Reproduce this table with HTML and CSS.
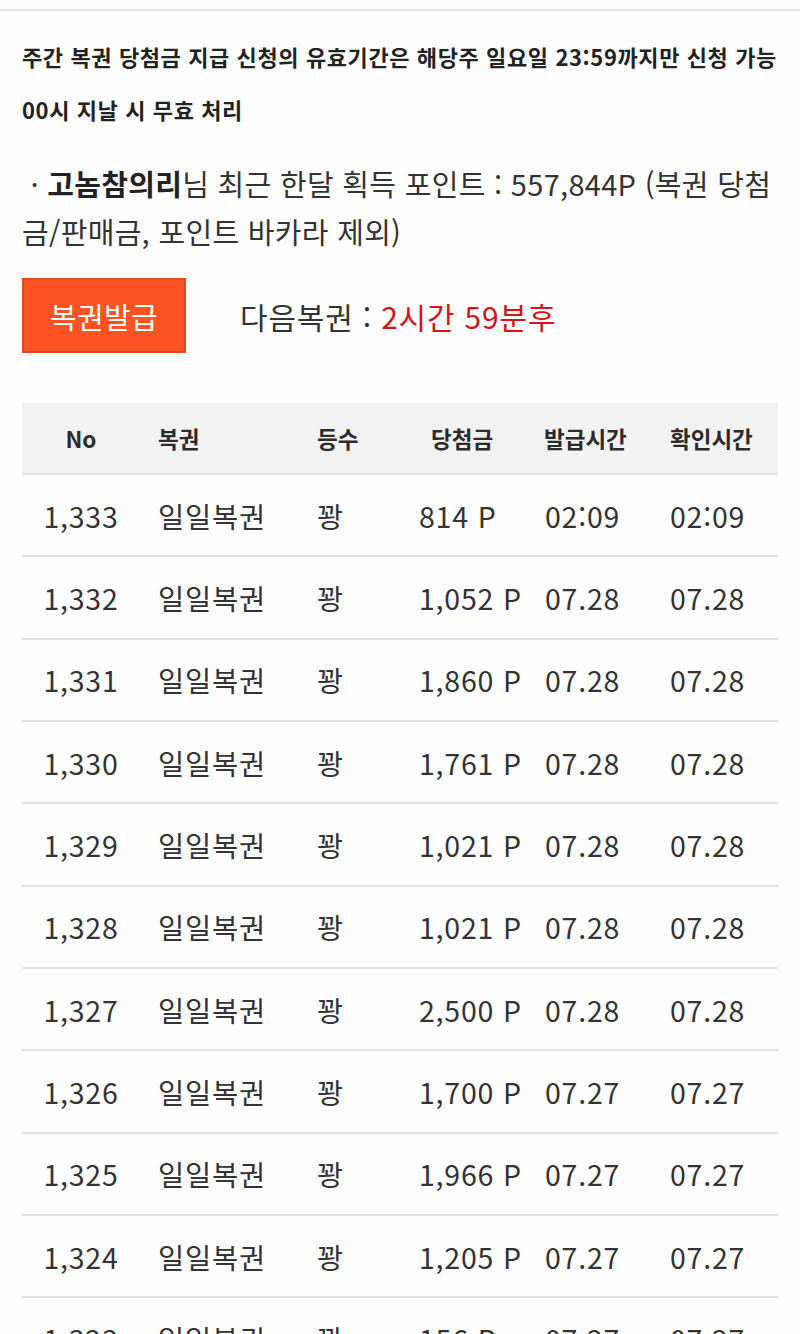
FILE: index.html
```html
<!DOCTYPE html>
<html lang="ko">
<head>
<meta charset="utf-8">
<link rel="stylesheet" href="styles.css">
</head>
<body>
<div class="topline"></div>
<main class="content">
  <p class="notice">주간 복권 당첨금 지급 신청의 유효기간은 해당주 일요일 23:59까지만 신청 가능<br>00시 지날 시 무효 처리</p>
  <p class="info">&nbsp;· <b>고놈참의리</b>님 최근 한달 획득 포인트 : 557,844P (복권 당첨금/판매금, 포인트 바카라 제외)</p>
  <div class="issue">
    <button class="issue-btn" type="button">복권발급</button>
    <span class="next">다음복권 : <span class="remain">2시간 59분후</span></span>
  </div>
  <div class="table">
    <div class="row head">
      <span class="c1">No</span><span class="c2">복권</span><span class="c3">등수</span><span class="c4">당첨금</span><span class="c5">발급시간</span><span class="c6">확인시간</span>
    </div>
    <div class="row"><span class="c1">1,333</span><span class="c2">일일복권</span><span class="c3">꽝</span><span class="c4">814 P</span><span class="c5">02:09</span><span class="c6">02:09</span></div>
    <div class="row"><span class="c1">1,332</span><span class="c2">일일복권</span><span class="c3">꽝</span><span class="c4">1,052 P</span><span class="c5">07.28</span><span class="c6">07.28</span></div>
    <div class="row"><span class="c1">1,331</span><span class="c2">일일복권</span><span class="c3">꽝</span><span class="c4">1,860 P</span><span class="c5">07.28</span><span class="c6">07.28</span></div>
    <div class="row"><span class="c1">1,330</span><span class="c2">일일복권</span><span class="c3">꽝</span><span class="c4">1,761 P</span><span class="c5">07.28</span><span class="c6">07.28</span></div>
    <div class="row"><span class="c1">1,329</span><span class="c2">일일복권</span><span class="c3">꽝</span><span class="c4">1,021 P</span><span class="c5">07.28</span><span class="c6">07.28</span></div>
    <div class="row"><span class="c1">1,328</span><span class="c2">일일복권</span><span class="c3">꽝</span><span class="c4">1,021 P</span><span class="c5">07.28</span><span class="c6">07.28</span></div>
    <div class="row"><span class="c1">1,327</span><span class="c2">일일복권</span><span class="c3">꽝</span><span class="c4">2,500 P</span><span class="c5">07.28</span><span class="c6">07.28</span></div>
    <div class="row"><span class="c1">1,326</span><span class="c2">일일복권</span><span class="c3">꽝</span><span class="c4">1,700 P</span><span class="c5">07.27</span><span class="c6">07.27</span></div>
    <div class="row"><span class="c1">1,325</span><span class="c2">일일복권</span><span class="c3">꽝</span><span class="c4">1,966 P</span><span class="c5">07.27</span><span class="c6">07.27</span></div>
    <div class="row"><span class="c1">1,324</span><span class="c2">일일복권</span><span class="c3">꽝</span><span class="c4">1,205 P</span><span class="c5">07.27</span><span class="c6">07.27</span></div>
    <div class="row"><span class="c1">1,323</span><span class="c2">일일복권</span><span class="c3">꽝</span><span class="c4">156 P</span><span class="c5">07.27</span><span class="c6">07.27</span></div>
  </div>
</main>
</body>
</html>
```
FILE: styles.css
```css
html, body {
  margin: 0;
  padding: 0;
  background: #fdfefd;
}
body {
  font-family: "Noto Sans CJK KR", "Noto Sans", sans-serif;
  color: #333;
  overflow: hidden;
}
.topline {
  height: 9px;
  border-bottom: 2px solid #dfe1e4;
}
.content {
  padding: 0 22px;
}
.notice {
  margin: 19px 0 0;
  font-size: 22px;
  font-weight: 700;
  line-height: 53px;
  color: #222;
  letter-spacing: 0.6px;
  white-space: nowrap;
}
.info {
  margin: 23px 0 0;
  font-size: 29px;
  line-height: 48px;
  letter-spacing: 0.3px;
  color: #333;
}
.info b {
  font-weight: 700;
  color: #222;
}
.issue {
  margin-top: 23px;
  display: flex;
  align-items: center;
  gap: 54px;
}
.issue-btn {
  width: 164px;
  height: 75px;
  box-sizing: border-box;
  background: #fd5324;
  border: 2px solid #dc4a20;
  color: #fff;
  font-family: inherit;
  font-size: 29px;
  letter-spacing: 0.3px;
  padding: 0;
}
.next {
  font-size: 30px;
  letter-spacing: 0.8px;
  color: #333;
}
.remain {
  color: #d5131a;
}
.table {
  margin-top: 50px;
}
.row {
  display: grid;
  grid-template-columns: 118px 160px 100px 126px 125px 127px;
  align-items: center;
  height: 82.33px;
  box-sizing: border-box;
  border-bottom: 2px solid #e2e2e2;
  font-size: 28.5px;
  letter-spacing: 0.8px;
  color: #333;
  white-space: nowrap;
}
.row .c1 { text-align: center; }
.row .c2 { padding-left: 18px; }
.row .c3 { padding-left: 17px; }
.row .c4 { padding-left: 19px; }
.row .c5 { padding-left: 19px; }
.row .c6 { padding-left: 19px; }
.row.head {
  height: 72px;
  background: #f2f2f2;
  font-size: 22.5px;
  letter-spacing: 0;
  font-weight: 700;
  color: #2b2b2b;
}
.row.head .c4 { padding-left: 31px; }
.row.head .c5 { padding-left: 18px; }
```
